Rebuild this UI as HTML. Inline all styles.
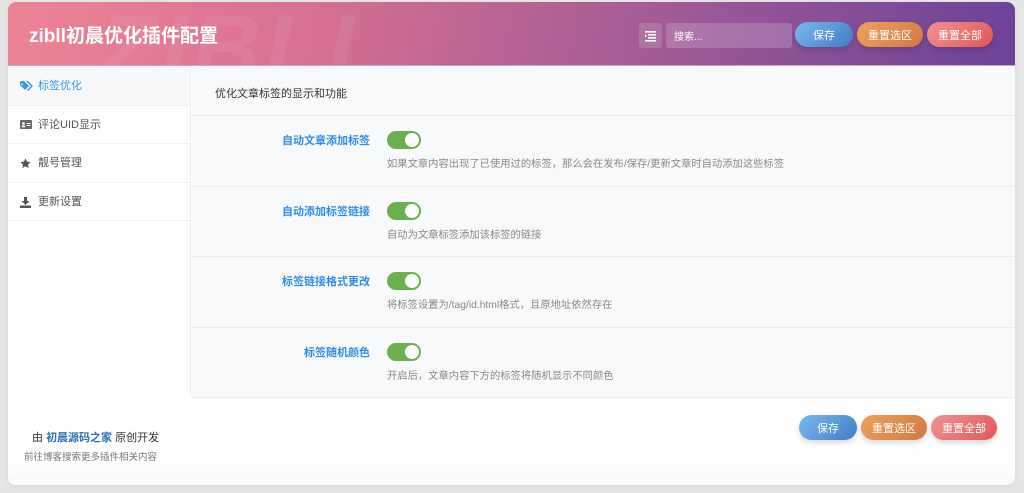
<!DOCTYPE html>
<html><head><meta charset="utf-8"><style>
*{box-sizing:border-box;margin:0;padding:0}
body{width:1024px;height:493px;background:#e6e6e6;font-family:"Liberation Sans","Noto Sans CJK SC",sans-serif;position:relative;overflow:hidden}
.card{position:absolute;left:8px;top:2px;width:1007px;height:483px;background:#fff;border-radius:8px;overflow:hidden;box-shadow:0 2px 6px rgba(0,0,0,.06)}
.hdr{position:absolute;left:0;top:0;width:1007px;height:64px;background:linear-gradient(100deg,#ef8395 0%,#d87093 30%,#a05a95 65%,#6a4399 100%);border-bottom:1px solid #c9a4c9;overflow:hidden}
.hdr h1{position:absolute;left:21px;top:19px;font-size:19px;color:#fff;font-weight:bold}
.wm{position:absolute;left:90px;top:-8px;font-size:96px;font-weight:bold;font-style:italic;color:rgba(255,255,255,.06);letter-spacing:4px}
.ico{position:absolute;left:631px;top:21px;width:23px;height:25px;background:rgba(255,255,255,.15);border-radius:3px}
.srch{position:absolute;left:658px;top:21px;width:126px;height:25px;background:rgba(255,255,255,.18);border-radius:3px;color:#fff;font-size:10px;padding:0 8px;display:flex;align-items:center}
.btn{position:absolute;height:25px;border-radius:13px;color:#fff;font-size:11px;display:flex;align-items:center;justify-content:center;box-shadow:0 3px 6px rgba(0,0,0,.15)}
.b1{background:linear-gradient(135deg,#7ab9ec,#3f7dc7)}
.b2{background:linear-gradient(135deg,#eea25a,#d27844)}
.b3{background:linear-gradient(135deg,#f29393,#e25757)}
.side{position:absolute;left:0;top:65px;width:183px;height:330px;background:#fff;border-right:1px solid #eee}
.it{height:38.5px;border-bottom:1px solid #f1f1f1;font-size:11px;color:#555;padding:0 0 0 30px;line-height:38px;position:relative}
.it.act{background:#f7f8fa;color:#3c95e8}
.it svg{position:absolute;left:12px;top:14px}
.main{position:absolute;left:184px;top:65px;width:823px;height:331px;background:#f8f9fb}
.top{height:49px;border-bottom:1px solid #ececec;font-size:11px;color:#333;padding:18px 0 0 23px}
.row{height:70.5px;border-bottom:1px solid #ececec;position:relative}
.lbl{position:absolute;right:645px;top:16px;font-size:11px;color:#2f8ce6;font-weight:bold}
.tg{position:absolute;left:195px;top:15px;width:34px;height:18px;border-radius:9px;background:#6ab04c}
.tg:after{content:"";position:absolute;right:2px;top:2px;width:14px;height:14px;border-radius:50%;background:#fff}
.ds{position:absolute;left:195px;top:39px;font-size:10.3px;color:#888}
.foot{position:absolute;left:0;top:396px;width:1007px;height:87px;background:linear-gradient(#fff 70%,#f9f9f9)}
</style></head><body>
<div class="card">
 <div class="hdr"><div class="wm">ZIBLL</div><h1>zibll初晨优化插件配置</h1>
  <div class="ico"><svg width="23" height="25" viewBox="0 0 23 25"><g fill="#fff"><rect x="6" y="8" width="11" height="1.6"/><rect x="9" y="11" width="8" height="1.6"/><rect x="9" y="14" width="8" height="1.6"/><rect x="6" y="17" width="11" height="1.6"/><path d="M6 11l2 1.8-2 1.8z"/></g></svg></div>
  <div class="srch">搜索...</div>
  <div class="btn b1" style="left:787px;top:20px;width:58px">保存</div>
  <div class="btn b2" style="left:849px;top:20px;width:66px">重置选区</div>
  <div class="btn b3" style="left:919px;top:20px;width:66px">重置全部</div>
 </div>
 <div class="side">
  <div class="it act"><svg width="13" height="10" viewBox="0 0 13 10"><path d="M0 1v3l5 5 4-4-5-5H1z M2 2.5a.8.8 0 1 0 .01 0z" fill="#3c95e8" fill-rule="evenodd"/><path d="M6 0l5 5-4 4 1 1 5-5-5-5z" fill="#3c95e8"/></svg>标签优化</div>
  <div class="it"><svg width="12" height="9" viewBox="0 0 12 9"><rect x="0" y="0" width="12" height="9" rx="1" fill="#666"/><circle cx="3.5" cy="3.5" r="1.4" fill="#fff"/><rect x="1.8" y="5.5" width="3.4" height="1.8" fill="#fff"/><rect x="6.5" y="3" width="4" height="1" fill="#fff"/><rect x="6.5" y="5" width="4" height="1" fill="#fff"/></svg>评论UID显示</div>
  <div class="it"><svg width="11" height="11" viewBox="0 0 24 24"><path d="M12 1l3.3 7 7.7.9-5.7 5.2 1.6 7.6L12 17.9 5.1 21.7l1.6-7.6L1 8.9 8.7 8z" fill="#555"/></svg>靓号管理</div>
  <div class="it"><svg width="11" height="11" viewBox="0 0 11 11"><path d="M4 0h3v4h2.5L5.5 8 1.5 4H4z" fill="#555"/><rect x="0" y="8.5" width="11" height="2.5" fill="#555"/></svg>更新设置</div>
 </div>
 <div class="main">
  <div class="top">优化文章标签的显示和功能</div>
  <div class="row"><div class="lbl">自动文章添加标签</div><div class="tg"></div><div class="ds">如果文章内容出现了已使用过的标签，那么会在发布/保存/更新文章时自动添加这些标签</div></div>
  <div class="row"><div class="lbl">自动添加标签链接</div><div class="tg"></div><div class="ds">自动为文章标签添加该标签的链接</div></div>
  <div class="row"><div class="lbl">标签链接格式更改</div><div class="tg"></div><div class="ds">将标签设置为/tag/id.html格式，且原地址依然存在</div></div>
  <div class="row"><div class="lbl">标签随机颜色</div><div class="tg"></div><div class="ds">开启后，文章内容下方的标签将随机显示不同颜色</div></div>
 </div>
 <div class="foot">
  <div style="position:absolute;left:24px;top:31px;font-size:11px;color:#333">由 <b style="color:#2a6fb5">初晨源码之家</b> 原创开发</div>
  <div style="position:absolute;left:16px;top:51px;font-size:9.5px;color:#777">前往博客搜索更多插件相关内容</div>
  <div class="btn b1" style="left:791px;top:17px;width:58px">保存</div>
  <div class="btn b2" style="left:853px;top:17px;width:66px">重置选区</div>
  <div class="btn b3" style="left:923px;top:17px;width:66px">重置全部</div>
 </div>
</div>
</body></html>
